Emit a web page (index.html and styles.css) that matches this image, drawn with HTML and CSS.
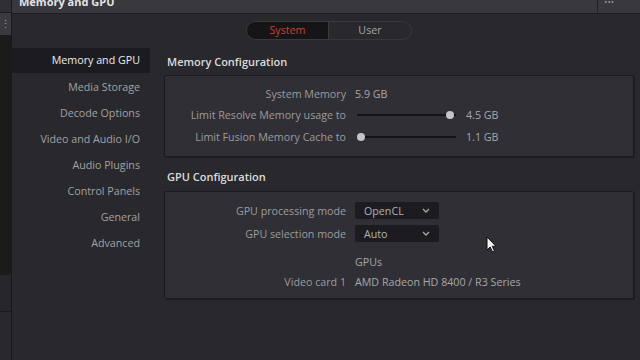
FILE: index.html
```html
<!DOCTYPE html>
<html lang="en">
<head>
  <meta charset="UTF-8" />
  <title>Memory and GPU</title>
  <link rel="stylesheet" href="styles.css">
</head>
<body>
  <div class="side-strip">
    <div class="strip-top"></div>
    <div class="strip-tab"><span class="dots">⋮</span></div>
    <div class="strip-dark"></div>
    <div class="strip-low"></div>
    <div class="strip-rest"></div>
  </div>

  <div class="window">
    <div class="titlebar">
      <span class="title">Memory and GPU</span>
      <span class="title-dots">•••</span>
    </div>

    <div class="tabs">
      <div class="seg">
        <div class="seg-item active">System</div>
        <div class="seg-item">User</div>
      </div>
    </div>

    <div class="body">
      <ul class="menu">
        <li class="selected">Memory and GPU</li>
        <li>Media Storage</li>
        <li>Decode Options</li>
        <li>Video and Audio I/O</li>
        <li>Audio Plugins</li>
        <li>Control Panels</li>
        <li>General</li>
        <li>Advanced</li>
      </ul>

      <div class="panels">
        <h3>Memory Configuration</h3>
        <div class="box mem">
          <div class="row">
            <span class="label">System Memory</span>
            <span class="value">5.9 GB</span>
          </div>
          <div class="row">
            <span class="label">Limit Resolve Memory usage to</span>
            <span class="slider"><span class="track"></span><span class="knob end"></span></span>
            <span class="value">4.5 GB</span>
          </div>
          <div class="row">
            <span class="label">Limit Fusion Memory Cache to</span>
            <span class="slider"><span class="track"></span><span class="knob start"></span></span>
            <span class="value">1.1 GB</span>
          </div>
        </div>

        <h3>GPU Configuration</h3>
        <div class="box gpu">
          <div class="row">
            <span class="label">GPU processing mode</span>
            <span class="select">OpenCL<svg width="8" height="5" viewBox="0 0 8 5"><path d="M1 1l3 3 3-3" fill="none" stroke="#a8a8a8" stroke-width="1.3"/></svg></span>
          </div>
          <div class="row">
            <span class="label">GPU selection mode</span>
            <span class="select">Auto<svg width="8" height="5" viewBox="0 0 8 5"><path d="M1 1l3 3 3-3" fill="none" stroke="#a8a8a8" stroke-width="1.3"/></svg></span>
          </div>
          <div class="row gpus">
            <span class="label"></span>
            <span class="value">GPUs</span>
          </div>
          <div class="row">
            <span class="label">Video card 1</span>
            <span class="value">AMD Radeon HD 8400 / R3 Series</span>
          </div>
        </div>
      </div>
    </div>

    <svg class="cursor" width="12" height="18" viewBox="0 0 12 18">
      <path d="M1 1v13l3.2-3 2.3 5 2-0.9-2.2-4.9H10z" fill="#f2f2f2" stroke="#111" stroke-width="1"/>
    </svg>
  </div>
</body>
</html>
```

FILE: styles.css
```css
* {
  box-sizing: border-box;
}
body {
  margin: 0;
  width: 640px;
  height: 360px;
  overflow: hidden;
  display: flex;
  background: #28282d;
  font-family: 'Open Sans', 'Noto Sans', sans-serif;
  font-size: 10.7px;
  color: #a2a2a4;
}
.side-strip {
  width: 12px;
  display: flex;
  flex-direction: column;
  border-right: 1px solid #19191c;
}
.strip-top {
  height: 13px;
  background: #2f2f34;
  border-bottom: 1px solid #1c1c1f;
}
.strip-tab {
  height: 22px;
  background: #3a3a3f;
  position: relative;
}
.dots {
  position: absolute;
  right: 0;
  top: 3px;
  font-size: 11px;
  color: #9a9a9a;
}
.strip-dark {
  height: 240px;
  background: #1b1b1c;
}
.strip-low {
  height: 37px;
  background: #27272b;
  border-bottom: 1px solid #1a1a1d;
}
.strip-rest {
  flex: 1;
  background: #28282d;
}
.window {
  flex: 1;
  position: relative;
  display: flex;
  flex-direction: column;
}
.titlebar {
  height: 14px;
  background: #38383d;
  border-bottom: 1px solid #1d1d21;
  display: flex;
  justify-content: space-between;
  overflow: hidden;
  padding-left: 7px;
}
.title {
  margin-top: -6px;
  line-height: 16px;
  font-weight: 700;
  font-size: 11px;
  color: #e4e4e4;
}
.title-dots {
  width: 43px;
  border-left: 1px solid #222226;
  margin-top: -5px;
  padding-left: 6px;
  font-size: 9px;
  color: #8c8c90;
}
.tabs {
  display: flex;
  justify-content: center;
  padding: 7px 0 0 6px;
  height: 34px;
}
.seg {
  display: flex;
  height: 19px;
  border: 1px solid #38383d;
  border-radius: 10px;
  overflow: hidden;
}
.seg-item {
  width: 82px;
  text-align: center;
  line-height: 17px;
  color: #a6a6a8;
}
.seg-item.active {
  background: #151518;
  color: #c9412f;
  border-right: 1px solid #3a3a3f;
}
.body {
  display: flex;
  flex: 1;
}
.menu {
  list-style: none;
  margin: 0;
  padding: 0;
  width: 138px;
}
.menu li {
  height: 26px;
  line-height: 26px;
  text-align: right;
  padding-right: 10px;
}
.menu li.selected {
  background: #1c1c20;
  color: #ececec;
  height: 25px;
  line-height: 25px;
  margin-bottom: 1px;
}
.panels {
  margin-left: 14px;
  width: 470px;
}
h3 {
  margin: 0;
  height: 27px;
  line-height: 27px;
  padding-left: 3px;
  font-size: 11px;
  font-weight: 600;
  color: #dcdcdc;
}
.box {
  background: #2f2f35;
  border: 1px solid #1b1b1f;
  border-radius: 2px;
  box-shadow: 1px 1px 0 #1e1e22;
  margin-bottom: 6px;
}
.box.mem {
  height: 82px;
  padding-top: 7px;
}
.box.gpu {
  height: 108px;
  padding-top: 7px;
}
.box + h3 {
  height: 28px;
}
.row {
  display: flex;
  align-items: center;
  height: 21.5px;
}
.label {
  width: 181px;
  text-align: right;
  margin-right: 9px;
  color: #9c9c9e;
}
.value {
  color: #a8a8aa;
}
.slider {
  position: relative;
  width: 99px;
  height: 8px;
  margin-left: 2px;
  margin-right: 10px;
}
.track {
  position: absolute;
  left: 0;
  right: 0;
  top: 3px;
  height: 2px;
  background: #141416;
}
.knob {
  position: absolute;
  top: 0;
  width: 8px;
  height: 8px;
  border-radius: 50%;
  background: #c4c4c6;
}
.knob.end {
  right: 2px;
}
.knob.start {
  left: 0;
}
.gpu .row {
  height: 23px;
}
.gpu .row.gpus {
  height: 28px;
  padding-top: 6px;
}
.gpu .row:last-child {
  height: 18px;
}
.select {
  width: 84px;
  height: 17px;
  background: #1c1c20;
  border-radius: 2px;
  padding: 0 9px;
  display: flex;
  align-items: center;
  justify-content: space-between;
  color: #b0b0b2;
}
.cursor {
  position: absolute;
  left: 474px;
  top: 236px;
}
```
